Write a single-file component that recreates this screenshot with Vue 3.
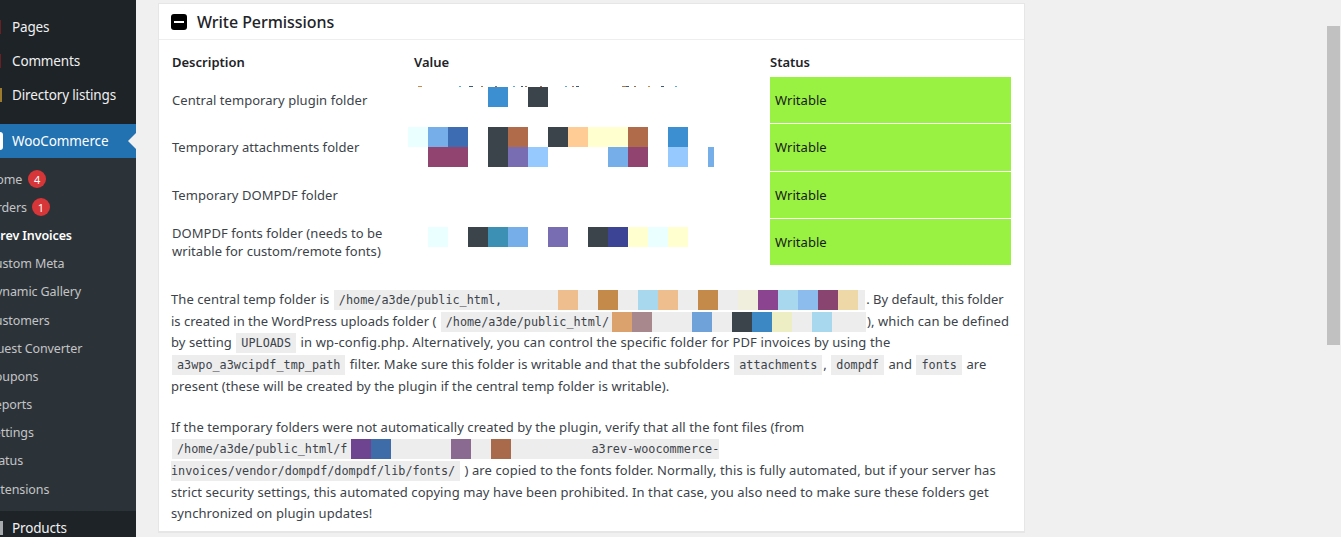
<script setup>
const dark = '#3c444b'
const topItems = ['Pages', 'Comments', 'Directory listings']
const subItems = [
  { t: 'Home', b: 4 }, { t: 'Orders', b: 1 }, { t: 'A3rev Invoices', cur: true }, { t: 'Custom Meta' },
  { t: 'Dynamic Gallery' }, { t: 'Customers' }, { t: 'Quest Converter' }, { t: 'Coupons' },
  { t: 'Reports' }, { t: 'Settings' }, { t: 'Status' }, { t: 'Extensions' }
]
const seq = (start, list) => {
  let pos = start
  return list.map(([x, w, c]) => {
    const m = x - pos
    pos = x + w
    return { width: w + 'px', marginLeft: m + 'px', background: c }
  })
}
const rows = [
  { d: ['Central temporary plugin folder'], pad: 10, lines: [seq(408, [[488, 20, '#3c90d2'], [528, 20, dark]])], top: true },
  { d: ['Temporary attachments folder'], pad: 3, tall: true, lines: [
    seq(408, [[408, 20, '#eaffff'], [428, 20, '#75aee8'], [448, 20, '#3e6cb3'], [488, 20, dark], [508, 20, '#b06c4a'], [548, 20, dark], [568, 20, '#ffcc96'], [588, 40, '#ffffd0'], [628, 20, '#b06c4a'], [668, 20, '#3c90d2']]),
    seq(408, [[428, 40, '#924470'], [488, 20, dark], [508, 20, '#786cb3'], [528, 20, '#96caff'], [608, 20, '#75aee8'], [628, 20, '#924470'], [668, 20, '#96caff'], [708, 6, '#75aee8']])
  ] },
  { d: ['Temporary DOMPDF folder'], pad: 0, lines: [] },
  { d: ['DOMPDF fonts folder (needs to be', 'writable for custom/remote fonts)'], pad: 8, lines: [
    seq(408, [[428, 20, '#eaffff'], [468, 20, dark], [488, 20, '#3c90b3'], [508, 20, '#75aee8'], [548, 20, '#786cb3'], [588, 20, dark], [608, 20, '#3c4496'], [628, 20, '#ffffd0'], [648, 20, '#eaffff'], [668, 20, '#ffffd0']])
  ] }
]
const clipMarks = seq(408, [[418, 4, '#c98a4a'], [459, 2, '#5aa9dc'], [469, 4, '#3c5a80'], [481, 2, '#a87a50'], [495, 2, '#a06a50'], [513, 2, '#5aa9dc'], [521, 2, '#3c5a80'], [525, 2, '#a06a50'], [540, 2, '#a06a50'], [565, 2, '#5aa9dc'], [572, 2, '#b06a60'], [576, 3, '#3c5a80'], [622, 4, '#a87a50'], [626, 3, '#3c5a80'], [634, 2, '#a06a50'], [648, 2, '#c98a4a'], [661, 3, '#3c5a80'], [675, 2, '#5aa9dc']])

const c1 = seq(502, [[558, 20, '#eebe8f'], [598, 20, '#c48a4a'], [638, 20, '#a8d8ee'], [658, 20, '#eebe8f'], [698, 20, '#c48a4a'], [738, 20, '#f0eedc'], [758, 20, '#8a4490'], [778, 20, '#a8d8ee'], [798, 20, '#8cbcee'], [818, 20, '#8a4470'], [838, 20, '#eed8a8']])
const c2 = seq(609, [[612, 20, '#dca26e'], [632, 20, '#a8888c'], [692, 20, '#6ea2d8'], [732, 20, dark], [752, 20, '#3c88c4'], [772, 20, '#eeeec4'], [812, 20, '#a8d8ee']])
const c3 = seq(347, [[351, 20, '#6e4490'], [371, 20, '#3e6ca8'], [451, 20, '#8a6a90'], [491, 20, '#a86a4a']])
</script>

<template>
  <div class="page">
    <aside class="side">
      <ul class="menu">
        <li v-for="(t, i) in topItems" :key="t" class="top">
          <span class="stub" :class="i === 2 ? 'stub-gold' : 'stub-red'"></span>{{ t }}
        </li>
      </ul>
      <div class="active">
        <span class="woo-icon"></span>WooCommerce
        <span class="arrow"></span>
      </div>
      <ul class="sub">
        <li v-for="s in subItems" :key="s.t" :class="{ cur: s.cur }">
          <span class="subtext">{{ s.t }}</span>
          <span v-if="s.b" class="badge">{{ s.b }}</span>
        </li>
      </ul>
      <div class="top products"><span class="stub stub-grey"></span>Products</div>
    </aside>

    <main class="main">
      <section class="card">
        <header class="head">
          <span class="toggle"><span class="dash"></span></span>
          <h2>Write Permissions</h2>
        </header>
        <div class="body">
          <div class="table">
            <div class="th">Description</div>
            <div class="th">Value</div>
            <div class="th">Status</div>
            <template v-for="r in rows" :key="r.d[0]">
              <div class="td" :class="{ tall: r.tall }"><span v-for="l in r.d" :key="l" class="dl">{{ l }}</span></div>
              <div class="td val" :style="{ paddingTop: r.pad + 'px' }">
                <div v-if="r.top" class="clip"><i v-for="(m, i) in clipMarks" :key="i" :style="m"></i></div>
                <div v-for="(line, i) in r.lines" :key="i" class="blocks"><i v-for="(b, j) in line" :key="j" :style="b"></i></div>
              </div>
              <div class="td st" :class="{ tall: r.tall }">Writable</div>
            </template>
          </div>

          <p class="p1">The central temp folder is <code class="l1">/home/a3de/public_html,<i v-for="(b, i) in c1" :key="i" class="px" :style="b"></i><i class="px-end e1"></i></code><span class="tight">. By default, this folder</span><br><span class="tight">is created in the WordPress uploads folder ( </span><code class="l2">/home/a3de/public_html/<i v-for="(b, i) in c2" :key="i" class="px" :style="b"></i><i class="px-end e2"></i></code>), which can be defined<br>by setting <code>UPLOADS</code> <span class="wide">in wp-config.php. Alternatively, you can control the specific folder for PDF invoices by using the</span><br><code>a3wpo_a3wcipdf_tmp_path</code> filter. Make sure this folder is writable and that the subfolders <code>attachments</code>, <code>dompdf</code> and <code>fonts</code> are<br>present (these will be created by the plugin if the central temp folder is writable).</p>

          <p class="p2">If the temporary folders were not automatically created by the plugin, verify that all the font files (from<br><code class="l3">/home/a3de/public_html/f<i v-for="(b, i) in c3" :key="i" class="px" :style="b"></i><i class="px-end e3"></i>a3rev-woocommerce-<br>invoices/vendor/dompdf/dompdf/lib/fonts/</code> ) are copied to the fonts folder. Normally, this is fully automated, but if your server has<br>strict security settings, this automated copying may have been prohibited. In that case, you also need to make sure these folders get<br>synchronized on plugin updates!</p>
        </div>
      </section>
    </main>

    <div class="scrolltrack"><div class="thumb"></div></div>
  </div>
</template>

<style>
html, body { margin: 0; background: #f0f0f1; overflow: hidden; }
</style>

<style scoped>
.page {
  display: flex;
  width: 1341px;
  height: 537px;
  overflow: hidden;
  background: #f0f0f1;
  font-family: "Noto Sans", "Open Sans", sans-serif;
  font-size: 13px;
  color: #3c434a;
}
.side {
  width: 136px;
  flex: none;
  background: #1d2327;
  padding-top: 10px;
  box-sizing: border-box;
  overflow: hidden;
}
ul { list-style: none; margin: 0; padding: 0; }
.top {
  display: flex;
  align-items: center;
  height: 34px;
  color: #f0f0f1;
  font-size: 13.5px;
  padding-left: 12px;
  position: relative;
  letter-spacing: -0.15px;
  white-space: nowrap;
}
.stub { position: absolute; left: 0; top: 10px; height: 14px; }
.stub-red { width: 1px; background: #6b1f24; }
.stub-gold { width: 2px; background: #9c7a2e; }
.stub-grey { width: 3px; background: #a7aaad; }
.active {
  position: relative;
  display: flex;
  align-items: center;
  height: 34px;
  margin-top: 12px;
  padding-left: 12px;
  background: #2271b1;
  color: #fff;
  font-size: 13.5px;
  letter-spacing: -0.1px;
}
.woo-icon {
  position: absolute; left: 0; top: 8px; width: 3px; height: 18px;
  background: #fff; border-radius: 0 3px 3px 0;
}
.arrow {
  position: absolute; right: 0; top: 9px; width: 0; height: 0;
  border: 8px solid transparent; border-right-color: #f0f0f1; border-left-width: 0;
}
.sub {
  background: #2c3338;
  height: 353px;
  padding-top: 7px;
  box-sizing: border-box;
  overflow: hidden;
}
.sub li {
  display: flex;
  align-items: center;
  height: 28.2px;
  margin-left: -13px;
  color: #c3c4c7;
  font-size: 12.5px;
  letter-spacing: -0.1px;
  white-space: nowrap;
}
.sub li:first-child .badge { margin-left: 6px; }
.sub li.cur { color: #fff; font-weight: 600; margin-left: -15px; }
.badge {
  width: 18px; height: 18px; margin-left: 5px; border-radius: 50%;
  background: #d63638; color: #fff; font-size: 11px;
  display: flex; align-items: center; justify-content: center;
}
.main { width: 1191px; flex: none; padding: 3px 0 0 22px; box-sizing: border-box; }
.card {
  width: 867px;
  height: 530px;
  box-sizing: border-box;
  background: #fff;
  border: 1px solid #e6e6e6;
  border-bottom-width: 2px;
}
.head {
  display: flex;
  align-items: center;
  gap: 10px;
  height: 35px;
  padding-left: 12px;
  border-bottom: 1px solid #eeeeee;
}
.toggle {
  width: 16px; height: 16px; border-radius: 3px; background: #000;
  display: flex; align-items: center; justify-content: center;
}
.dash { width: 10px; height: 2px; background: #fff; }
h2 { margin: 0; font-size: 16px; font-weight: 500; color: #1d2327; letter-spacing: -0.05px; }
.body { padding: 0 12px; }
.table {
  display: grid;
  grid-template-columns: 242px 356px 241px;
  grid-template-rows: 36px 46px 47px 46px 46px;
  row-gap: 1px;
  margin-left: 1px;
}
.th { font-weight: 600; color: #1d2327; align-self: center; padding-top: 8px; }
.td { display: flex; flex-direction: column; justify-content: center; line-height: 18px; letter-spacing: 0.05px; box-sizing: border-box; }
.tall { padding-bottom: 1px; }
.dl { display: block; white-space: nowrap; }
.val { margin-left: -6px; position: relative; justify-content: flex-start; }
.clip { position: absolute; left: 0; top: 9px; height: 1px; display: flex; }
.clip i { display: block; height: 1px; flex: none; }
.blocks { display: flex; height: 20px; }
.blocks i { display: block; height: 20px; flex: none; }
.st { background: #99f142; color: #1a1a1a; padding-left: 5px; }
p {
  margin: 0;
  line-height: 21.7px;
  white-space: nowrap;
  letter-spacing: 0.08px;
}
.tight { letter-spacing: 0; }
.wide { letter-spacing: 0.13px; }
.p1 { margin-top: 24px; }
.p2 { margin-top: 19px; }
code {
  font-family: "DejaVu Sans Mono", "Liberation Mono", monospace;
  font-size: 11.8px;
  line-height: 1;
  letter-spacing: 0;
  background: #ededed;
  padding: 3px 5px;
  margin: 0 1px;
  color: #3c434a;
}
.px { display: inline-block; height: 20px; vertical-align: -6px; margin-top: -8px; }
.px-end { display: inline-block; height: 1px; }
.e1 { width: 2px; }
.e2 { width: 29px; }
.e3 { width: 80px; }
.scrolltrack { flex: 1; position: relative; }
.thumb { position: absolute; right: 1px; top: 26px; width: 13px; height: 319px; background: #c1c1c1; }
</style>
